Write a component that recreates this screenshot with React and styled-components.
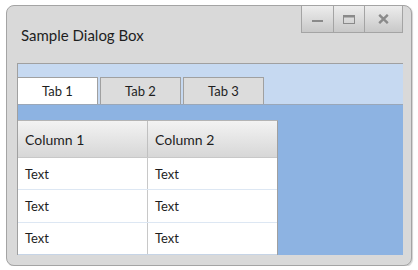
import React from "react";
import styled, { createGlobalStyle } from "styled-components";

const GlobalStyle = createGlobalStyle`
  body {
    margin: 0;
    background: #ffffff;
    font-family: "Lato", "Liberation Sans", sans-serif;
  }
`;

const columns = ["Column 1", "Column 2"];
const rows = [
  ["Text", "Text"],
  ["Text", "Text"],
  ["Text", "Text"],
];
const tabs = ["Tab 1", "Tab 2", "Tab 3"];

const App = () => {
  return (
    <>
      <GlobalStyle />
      <Window>
        <TitleBar>
          <Title>Sample Dialog Box</Title>
          <Controls>
            <ControlButton $w={32}>
              <svg width="11" height="10" viewBox="0 0 11 10">
                <rect x="0" y="6" width="11" height="2" fill="#8a8a8a" />
              </svg>
            </ControlButton>
            <ControlButton $w={31}>
              <svg width="12" height="9" viewBox="0 0 12 9">
                <rect x="0.5" y="0.5" width="11" height="8" fill="none" stroke="#8a8a8a" />
                <rect x="0" y="0" width="12" height="2.5" fill="#8a8a8a" />
              </svg>
            </ControlButton>
            <ControlButton $w={39} $last>
              <svg width="11" height="10" viewBox="0 0 11 10">
                <path d="M1.2 0.8 L9.8 9.2 M9.8 0.8 L1.2 9.2" stroke="#8a8a8a" strokeWidth="2.4" />
              </svg>
            </ControlButton>
          </Controls>
        </TitleBar>
        <Panel>
          <TabStrip>
            {tabs.map((t, i) => (
              <Tab key={t} $active={i === 0}>
                {t}
              </Tab>
            ))}
          </TabStrip>
          <TabBody>
            <Table>
              <HeaderRow>
                {columns.map((c) => (
                  <HeaderCell key={c}>{c}</HeaderCell>
                ))}
              </HeaderRow>
              {rows.map((r, i) => (
                <Row key={i} $last={i === rows.length - 1}>
                  {r.map((cell, j) => (
                    <Cell key={j}>{cell}</Cell>
                  ))}
                </Row>
              ))}
            </Table>
          </TabBody>
        </Panel>
      </Window>
    </>
  );
};

export default App;

const Window = styled.div`
  margin: 5px 0 0 6px;
  width: 406px;
  height: 261px;
  box-sizing: border-box;
  border: 1px solid #a4a4a4;
  border-radius: 8px;
  background: #d9d9d9;
  box-shadow: 1px 1px 1px rgba(0, 0, 0, 0.18);
  padding: 0 8px 10px 10px;
  display: flex;
  flex-direction: column;
`;

const TitleBar = styled.div`
  height: 57px;
  display: flex;
  justify-content: space-between;
  align-items: flex-start;
`;

const Title = styled.div`
  padding: 20px 0 0 4px;
  font-size: 15px;
  color: #1e1e1e;
  line-height: 18px;
`;

const Controls = styled.div`
  display: flex;
  margin-top: -1px;
`;

const ControlButton = styled.div`
  width: ${(p) => p.$w}px;
  height: 28px;
  box-sizing: border-box;
  border: 1px solid #a4a4a4;
  border-right: ${(p) => (p.$last ? "1px solid #a4a4a4" : "none")};
  background: linear-gradient(#ededed, #c8c8c8);
  display: flex;
  align-items: center;
  justify-content: center;
`;

const Panel = styled.div`
  flex: 1;
  width: 386px;
  display: flex;
  flex-direction: column;
  border-top: 1px solid #a0a0a0;
  border-left: 1px solid #a0a0a0;
  box-sizing: border-box;
`;

const TabStrip = styled.div`
  height: 41px;
  box-sizing: border-box;
  background: #c6d9f1;
  border-bottom: 1px solid #9aa7b8;
  padding-top: 13px;
  display: flex;
  gap: 2px;
  align-items: flex-end;
`;

const Tab = styled.div`
  width: ${(p) => (p.$active ? 80 : 81)}px;
  height: 27px;
  box-sizing: border-box;
  border: 1px solid #a0a0a0;
  border-bottom: none;
  border-left: ${(p) => (p.$active ? "none" : "1px solid #a0a0a0")};
  background: ${(p) => (p.$active ? "#ffffff" : "#dcdcdc")};
  font-size: 13px;
  color: #1e1e1e;
  display: flex;
  align-items: center;
  justify-content: center;
`;

const TabBody = styled.div`
  flex: 1;
  background: #8db3e2;
  padding-top: 15px;
  display: flex;
  flex-direction: column;
`;

const Table = styled.div`
  width: 259px;
  flex: 1;
  background: #ffffff;
  border-top: 1px solid #b4b4b4;
  border-right: 1px solid #a0a0a0;
  display: flex;
  flex-direction: column;
`;

const HeaderRow = styled.div`
  height: 36px;
  display: grid;
  grid-template-columns: 129px 1fr;
  background: linear-gradient(#f3f3f3, #d7d7d7);
  border-bottom: 1px solid #c8c8c8;
`;

const HeaderCell = styled.div`
  padding-left: 7px;
  display: flex;
  align-items: center;
  font-size: 14px;
  color: #1e1e1e;
  & + & {
    border-left: 1px solid #c0c0c0;
  }
`;

const Row = styled.div`
  flex: 1;
  display: grid;
  grid-template-columns: 129px 1fr;
  border-bottom: 1px solid ${(p) => (p.$last ? "#c6d4e6" : "#dde7f3")};
`;

const Cell = styled.div`
  padding-left: 7px;
  display: flex;
  align-items: center;
  font-size: 13px;
  color: #1e1e1e;
  & + & {
    border-left: 1px solid #c8c8c8;
  }
`;
